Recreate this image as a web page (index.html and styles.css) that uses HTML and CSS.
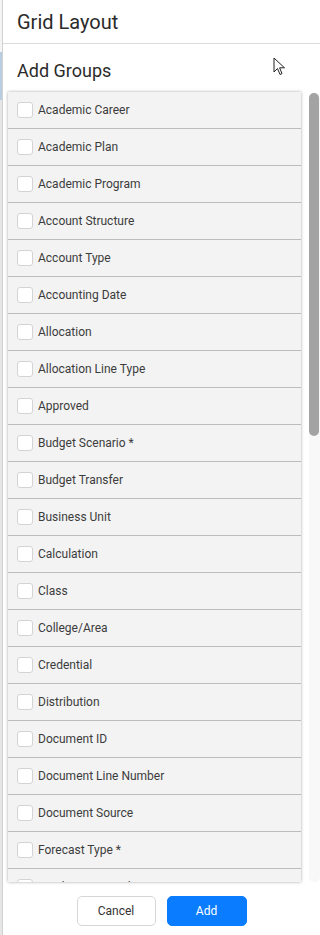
FILE: index.html
```html
<!DOCTYPE html>
<html>
<head>
<meta charset="utf-8">
<link rel="stylesheet" href="styles.css">
</head>
<body>
<div class="page">
  <div class="edge"></div>
  <div class="drawer">
    <div class="header">Grid Layout</div>
    <div class="sub">Add Groups</div>
    <div class="body">
      <div class="card">
        <div class="row"><span class="cb"></span><span>Academic Career</span></div>
        <div class="row"><span class="cb"></span><span>Academic Plan</span></div>
        <div class="row"><span class="cb"></span><span>Academic Program</span></div>
        <div class="row"><span class="cb"></span><span>Account Structure</span></div>
        <div class="row"><span class="cb"></span><span>Account Type</span></div>
        <div class="row"><span class="cb"></span><span>Accounting Date</span></div>
        <div class="row"><span class="cb"></span><span>Allocation</span></div>
        <div class="row"><span class="cb"></span><span>Allocation Line Type</span></div>
        <div class="row"><span class="cb"></span><span>Approved</span></div>
        <div class="row"><span class="cb"></span><span>Budget Scenario *</span></div>
        <div class="row"><span class="cb"></span><span>Budget Transfer</span></div>
        <div class="row"><span class="cb"></span><span>Business Unit</span></div>
        <div class="row"><span class="cb"></span><span>Calculation</span></div>
        <div class="row"><span class="cb"></span><span>Class</span></div>
        <div class="row"><span class="cb"></span><span>College/Area</span></div>
        <div class="row"><span class="cb"></span><span>Credential</span></div>
        <div class="row"><span class="cb"></span><span>Distribution</span></div>
        <div class="row"><span class="cb"></span><span>Document ID</span></div>
        <div class="row"><span class="cb"></span><span>Document Line Number</span></div>
        <div class="row"><span class="cb"></span><span>Document Source</span></div>
        <div class="row"><span class="cb"></span><span>Forecast Type *</span></div>
        <div class="row"><span class="cb"></span><span>Fund Group Level 1</span></div>
        <div class="row"><span class="cb"></span><span>Fund Type</span></div>
      </div>
      <div class="track"><div class="thumb"></div></div>
    </div>
    <div class="footer">
      <button class="btn cancel">Cancel</button>
      <button class="btn add">Add</button>
    </div>
  </div>
  <svg class="cursor" width="14" height="20" viewBox="0 0 14 20"><path d="M1 1 L1 15 L4.5 11.5 L7 17.5 L9 16.6 L6.6 10.8 L11.5 10.8 Z" fill="#fff" stroke="#222" stroke-width="1" stroke-linejoin="round"/></svg>
</div>
</body>
</html>
```
FILE: styles.css
```css
html, body { margin: 0; padding: 0; background: #fff; }
body { font-family: Roboto, "Liberation Sans", sans-serif; color: #333; }
.page { position: relative; display: flex; width: 320px; height: 935px; overflow: hidden; }
.edge { width: 2px; background: linear-gradient(#f4f4f4 0, #f4f4f4 52px, #b9cde0 52px, #b9cde0 100px, #e6e6e6 100px); }
.drawer { flex: 1; border-left: 1px solid #d2d2d2; display: flex; flex-direction: column; background: #fff; }
.header { height: 43px; border-bottom: 1px solid #dcdcdc; padding-left: 14px; display: flex; align-items: center; font-size: 20px; color: #2b2b2b; }
.sub { height: 48px; padding-left: 14px; display: flex; align-items: center; font-size: 18px; color: #2b2b2b; padding-top: 4px; box-sizing: border-box; }
.body { height: 790px; display: flex; padding-left: 5px; }
.card { width: 293px; height: 790px; overflow: hidden; background: #f3f3f3; box-shadow: 0 0 3px rgba(0,0,0,0.35); }
.row { height: 36px; border-bottom: 1px solid #bcbcbc; display: flex; align-items: center; padding-left: 9px; gap: 5px; font-size: 12px; color: #3c3c3c; }
.cb { width: 14px; height: 14px; border: 1px solid #d4d4d4; border-radius: 3px; background: #fff; flex: none; }
.track { margin-left: 8px; width: 11px; height: 790px; background: #f8f8f8; border-radius: 6px; }
.thumb { margin-top: 1px; width: 10px; height: 343px; background: #a3a3a3; border-radius: 5px; }
.footer { height: 53px; display: flex; justify-content: center; gap: 11px; padding-top: 14px; box-sizing: border-box; }
.btn { height: 30px; border-radius: 5px; font-family: Roboto, "Liberation Sans", sans-serif; font-size: 12px; padding: 0; }
.cancel { width: 79px; background: #fff; border: 1px solid #d6d6d6; color: #333; }
.add { width: 80px; background: #0a7cff; border: 1px solid #0a7cff; color: #fff; }
.cursor { position: absolute; left: 273px; top: 57px; }
```
